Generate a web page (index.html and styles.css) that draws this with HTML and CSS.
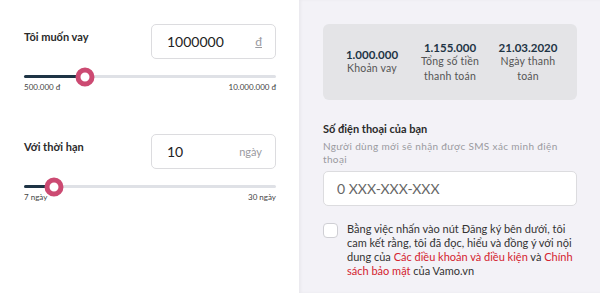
FILE: index.html
```html
<!DOCTYPE html>
<html lang="vi">
<head>
    <meta charset="UTF-8">
    <meta name="viewport" content="width=device-width, initial-scale=1.0">
    <title>Vamo - Đăng ký vay</title>
    <link rel="stylesheet" href="styles.css">
</head>
<body>
    <div class="page">
        <div class="calc">
            <div class="field">
                <div class="field-row">
                    <label class="field-label">Tôi muốn vay</label>
                    <div class="amount-box">
                        <span class="amount-value">1000000</span>
                        <span class="amount-unit currency">đ</span>
                    </div>
                </div>
                <div class="slider">
                    <div class="slider-fill" style="width: 61px"></div>
                    <div class="slider-thumb" style="left: 61px"></div>
                </div>
                <div class="slider-scale">
                    <span>500.000 đ</span>
                    <span>10.000.000 đ</span>
                </div>
            </div>

            <div class="field">
                <div class="field-row">
                    <label class="field-label">Với thời hạn</label>
                    <div class="amount-box">
                        <span class="amount-value">10</span>
                        <span class="amount-unit">ngày</span>
                    </div>
                </div>
                <div class="slider">
                    <div class="slider-fill" style="width: 30px"></div>
                    <div class="slider-thumb" style="left: 30px"></div>
                </div>
                <div class="slider-scale">
                    <span>7 ngày</span>
                    <span>30 ngày</span>
                </div>
            </div>
        </div>

        <div class="signup">
            <div class="summary">
                <div class="summary-item">
                    <div class="summary-value">1.000.000</div>
                    <div class="summary-label">Khoản vay</div>
                </div>
                <div class="summary-item">
                    <div class="summary-value">1.155.000</div>
                    <div class="summary-label">Tổng số tiền thanh toán</div>
                </div>
                <div class="summary-item">
                    <div class="summary-value">21.03.2020</div>
                    <div class="summary-label">Ngày thanh toán</div>
                </div>
            </div>

            <div class="phone">
                <div class="field-label">Số điện thoại của bạn</div>
                <p class="hint">Người dùng mới sẽ nhận được SMS xác minh điện thoại</p>
                <input class="phone-input" type="text" placeholder="0 XXX-XXX-XXX">
            </div>

            <label class="agree">
                <span class="checkbox"></span>
                <span class="agree-text">Bằng việc nhấn vào nút Đăng ký bên dưới, tôi cam kết rằng, tôi đã đọc, hiểu và đồng ý với nội dung của <a href="#">Các điều khoản và điều kiện</a> và <a href="#">Chính sách bảo mật</a> của Vamo.vn</span>
            </label>
        </div>
    </div>
</body>
</html>
```

FILE: styles.css
```css
:root {
    --navy: #1e3445;
    --pink: #cc4a72;
    --track: #dfe1e6;
    --panel: #f3f2f7;
    --box: #e4e4e7;
    --border: #dcdcdf;
    --text: #333333;
    --muted: #9a9a9f;
    --link: #d3232f;
}

body {
    margin: 0;
    font-family: 'Lato', 'Open Sans', sans-serif;
    color: var(--text);
    background: #ffffff;
}

.page {
    display: flex;
    height: 293px;
}

.calc {
    width: 252px;
    padding: 24px 23px 0 24px;
    background: #ffffff;
}

.field {
    margin-bottom: 42px;
}

.field-row {
    display: flex;
    justify-content: space-between;
    align-items: flex-start;
}

.field-label {
    font-size: 11px;
    font-weight: bold;
    color: #2a2a2a;
    margin-top: 6px;
}

.amount-box {
    width: 125px;
    height: 35px;
    box-sizing: border-box;
    border: 1px solid var(--border);
    border-radius: 5px;
    display: flex;
    align-items: center;
    justify-content: space-between;
    padding: 0 13px 0 15px;
}

.amount-value {
    font-size: 14px;
    color: #222;
}

.amount-unit {
    font-size: 11px;
    color: var(--muted);
}

.amount-unit.currency {
    text-decoration: underline;
    font-size: 12px;
}

.slider {
    position: relative;
    height: 3px;
    margin-top: 16px;
    background: var(--track);
    border-radius: 2px;
}

.slider-fill {
    height: 3px;
    background: var(--navy);
    border-radius: 2px;
}

.slider-thumb {
    position: absolute;
    top: 50%;
    width: 9px;
    height: 9px;
    border: 5px solid var(--pink);
    border-radius: 50%;
    background: #ffffff;
    transform: translate(-50%, -50%);
}

.slider-scale {
    display: flex;
    justify-content: space-between;
    font-size: 8px;
    color: #444;
    margin-top: 4px;
}

.signup {
    flex: 1;
    background: var(--panel);
    padding: 24px 23px 0 24px;
    box-shadow: inset 2px 0 3px rgba(0, 0, 0, 0.04);
}

.summary {
    display: flex;
    align-items: center;
    justify-content: space-around;
    height: 76px;
    background: var(--box);
    border-radius: 6px;
    padding: 0 10px;
}

.summary-item {
    width: 68px;
    text-align: center;
}

.summary-value {
    font-size: 11.5px;
    font-weight: bold;
    color: var(--navy);
}

.summary-label {
    font-size: 10.5px;
    line-height: 15px;
    letter-spacing: 0.2px;
    color: #555;
}

.phone {
    margin-top: 22px;
}

.phone .field-label {
    margin: 0;
}

.hint {
    font-size: 10px;
    line-height: 13px;
    letter-spacing: 0.35px;
    color: var(--muted);
    margin: 5px 0 5px;
}

.phone-input {
    display: block;
    width: 100%;
    height: 35px;
    box-sizing: border-box;
    border: 1px solid var(--border);
    border-radius: 5px;
    background: #ffffff;
    padding: 0 13px;
    font-family: inherit;
    font-size: 14px;
}

.phone-input::placeholder {
    color: #666;
}

.agree {
    display: flex;
    gap: 9px;
    margin-top: 16px;
}

.checkbox {
    flex: none;
    width: 13px;
    height: 13px;
    margin-top: 1px;
    border: 1px solid #cfcfd4;
    border-radius: 4px;
    background: #ffffff;
}

.agree-text {
    font-size: 11px;
    line-height: 14px;
    color: #333;
}

.agree-text a {
    color: var(--link);
    text-decoration: none;
}
```
